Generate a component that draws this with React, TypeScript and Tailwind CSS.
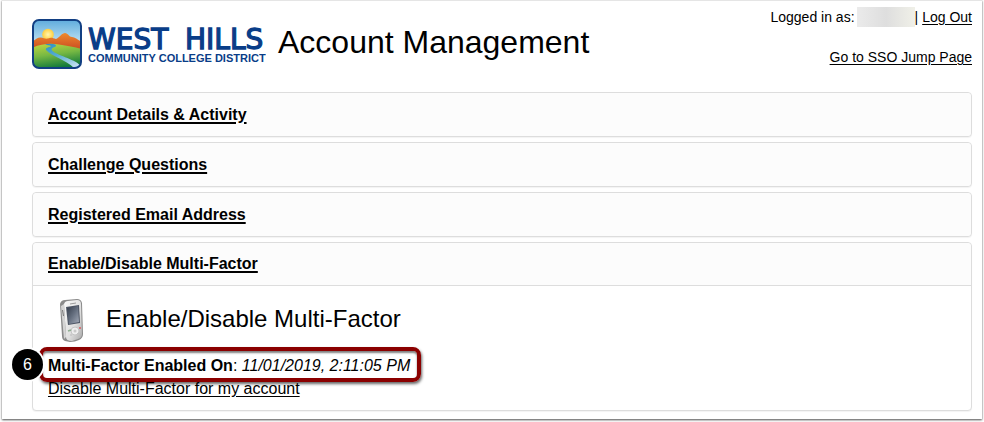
import type { ReactNode } from "react";

function Logo() {
  return (
    <div className="flex gap-1.5" role="img" aria-label="West Hills Community College District">
      <svg width="50" height="50" viewBox="0 0 50 50" aria-hidden="true">
        <defs>
          <linearGradient id="sky" x1="0" y1="0" x2="0" y2="1">
            <stop offset="0" stopColor="#5ba9dc" />
            <stop offset="0.5" stopColor="#c3e5f3" />
          </linearGradient>
          <linearGradient id="ridge" x1="0" y1="0" x2="0" y2="1">
            <stop offset="0" stopColor="#ef8a2c" />
            <stop offset="1" stopColor="#c23f20" />
          </linearGradient>
          <linearGradient id="field" x1="0" y1="0" x2="0.3" y2="1">
            <stop offset="0" stopColor="#c3d83f" />
            <stop offset="0.5" stopColor="#76b843" />
            <stop offset="1" stopColor="#127a3c" />
          </linearGradient>
          <linearGradient id="river" x1="0" y1="0" x2="0.6" y2="1">
            <stop offset="0" stopColor="#2b8fc4" />
            <stop offset="0.5" stopColor="#58add2" />
            <stop offset="1" stopColor="#b9dcec" />
          </linearGradient>
          <radialGradient id="sun">
            <stop offset="0" stopColor="#fff6b0" />
            <stop offset="1" stopColor="#ffcf3c" />
          </radialGradient>
          <clipPath id="frame">
            <rect x="1" y="1" width="48" height="48" rx="6" />
          </clipPath>
        </defs>
        <g clipPath="url(#frame)">
          <rect width="50" height="50" fill="url(#sky)" />
          <circle cx="16" cy="15.500" r="5.800" fill="url(#sun)" />
          <path d="M0 23C4 20 6 18 9 18.500C12 19 13 20 16 19.500C19 18 21 19 24 20C28 18 30 14 33 14C36 14 37 18 40 18C43 18 46 21 50 23V34H0Z" fill="url(#ridge)" />
          <path d="M0 29C8 25 18 24 27 25.500C36 27 43 28 50 30V50H0Z" fill="url(#field)" />
          <path d="M13 25.500C18 24 24 25 24 26.500C25 28 18 28.500 20 31.500C24 36 42 40 48 46L47 50H43C36 42 19 37 14 31C13 28 19 28.500 19 27C18 26 15 26.500 13 25.500Z" fill="url(#river)" />
        </g>
        <rect x="1" y="1" width="48" height="48" rx="6" fill="none" stroke="#123f83" strokeWidth="2" />
      </svg>
      <svg width="178" height="50" viewBox="0 0 178 50" fill="#093d88" aria-hidden="true">
        <text y="30" stroke="#093d88" strokeWidth="1.300" className="font-['DejaVu_Sans',sans-serif] text-[28px]">
          <tspan x="0">WEST</tspan>
          <tspan x="97">HILLS</tspan>
        </text>
        <text x="0" y="43" className="font-['Liberation_Sans',sans-serif] text-[11px] font-bold">COMMUNITY COLLEGE DISTRICT</text>
      </svg>
    </div>
  );
}

function PhoneIcon() {
  return (
    <svg width="48" height="48" viewBox="0 0 48 48" aria-hidden="true">
      <defs>
        <linearGradient id="shell" x1="0" y1="0" x2="1" y2="1">
          <stop offset="0" stopColor="#fafafa" />
          <stop offset="0.6" stopColor="#dedede" />
          <stop offset="1" stopColor="#aaaaaa" />
        </linearGradient>
        <linearGradient id="screen" x1="0" y1="0" x2="1" y2="1">
          <stop offset="0" stopColor="#343c4a" />
          <stop offset="0.5" stopColor="#667080" />
          <stop offset="1" stopColor="#a3aab8" />
        </linearGradient>
      </defs>
      <g transform="translate(0 1)">
        <path d="M12 7Q13 3 17 3L29 2Q33 2 34 6L35 37Q35 41 31 43Q27 45 22 45L17 44Q14 43 14 39Z" fill="#8b8b8b" />
        <path d="M16 7Q17 4 20 4L29 3Q33 3 33 7L34 37Q34 41 30 42L24 44Q18 44 18 40Z" fill="url(#shell)" />
        <path d="M13 9L16 7L18 40L16 42Z" fill="#d4d4d4" />
        <path d="M14 13L15 13L16 19L15 19Z" fill="#777" />
        <path d="M18 10L31 8L32 26L20 28Z" fill="#4d5564" />
        <path d="M19 11L30 9L31 25L21 27Z" fill="url(#screen)" />
        <path d="M22 7L28 6" stroke="#9b9b9b" />
        <ellipse cx="27" cy="34" rx="4" ry="4" fill="#eee" stroke="#c4c4c4" />
        <circle cx="27" cy="34" r="1.500" fill="#c9c9c9" />
        <path d="M20 34L23 33" stroke="#8fae91" strokeWidth="1.500" />
        <path d="M31 31L33 31" stroke="#d75c61" strokeWidth="1.500" />
        <path d="M22 38L24 38M29 37L31 36" stroke="#bbb" />
      </g>
    </svg>
  );
}

function Panel({ title, children }: { title: string; children?: ReactNode }) {
  return (
    <section className="rounded border border-[#dddddd] bg-white shadow-[0_1px_1px_rgba(0,0,0,0.05)]">
      <h2 className={`bg-[#fcfcfc] px-[15px] text-base font-bold ${children ? "rounded-t border-b border-[#dddddd] pt-2 pb-[9px]" : "rounded py-[9px]"}`}>
        <a href="#" className="block w-fit leading-[25px] underline decoration-2 underline-offset-2">{title}</a>
      </h2>
      {children}
    </section>
  );
}

export default function App() {
  return (
    <div className="bg-white px-0.5 pb-[3px] font-['Liberation_Sans',Arial,sans-serif] text-black">
      <main className="border-t border-[#e5e5e5] bg-white pr-2.5 pb-2 pl-[30px] shadow-[0_1px_2px_rgba(0,0,0,0.7)]">
        <header className="flex h-[91px] items-start justify-between">
          <div className="flex items-start gap-3 pt-[18px]">
            <Logo />
            <h1 className="text-[32px] leading-[46px]">Account Management</h1>
          </div>
          <div className="flex flex-col items-end gap-5 pt-1.5 text-sm">
            <div className="flex items-center">
              <span>Logged in as:</span>
              <span className="ml-0.5 h-5 w-[58px] bg-linear-to-r from-[#ebebeb] via-[#dedede] to-[#f0f0e8]" />
              <span className="mr-1">|</span>
              <a href="#" className="underline underline-offset-2">Log Out</a>
            </div>
            <a href="#" className="underline underline-offset-2">Go to SSO Jump Page</a>
          </div>
        </header>
        <div className="flex flex-col gap-[5px]">
          <Panel title="Account Details & Activity" />
          <Panel title="Challenge Questions" />
          <Panel title="Registered Email Address" />
          <Panel title="Enable/Disable Multi-Factor">
            <div className="px-[15px] pt-2.5 pb-2.5">
              <div className="flex items-start gap-2.5">
                <PhoneIcon />
                <h3 className="text-2xl leading-[46px]">Enable/Disable Multi-Factor</h3>
              </div>
              <div className="relative w-fit pt-2.5 leading-6">
                <div className="pointer-events-none absolute top-[3px] -left-[9px] -right-[11px] h-[35px] rounded-lg border-4 border-[#8b0000] shadow-[1px_2px_3px_rgba(0,0,0,0.6),inset_0_2px_2px_rgba(0,0,0,0.5)]" />
                <span className="absolute top-[5px] -left-9 flex size-[31px] items-center justify-center rounded-full bg-black text-base text-white shadow-[0_0_0_2px_white]">6</span>
                <p><strong>Multi-Factor Enabled On</strong>: <em>11/01/2019, 2:11:05 PM</em></p>
              </div>
              <a href="#" className="block w-fit leading-[22px] underline underline-offset-2">Disable Multi-Factor for my account</a>
            </div>
          </Panel>
        </div>
      </main>
    </div>
  );
}
